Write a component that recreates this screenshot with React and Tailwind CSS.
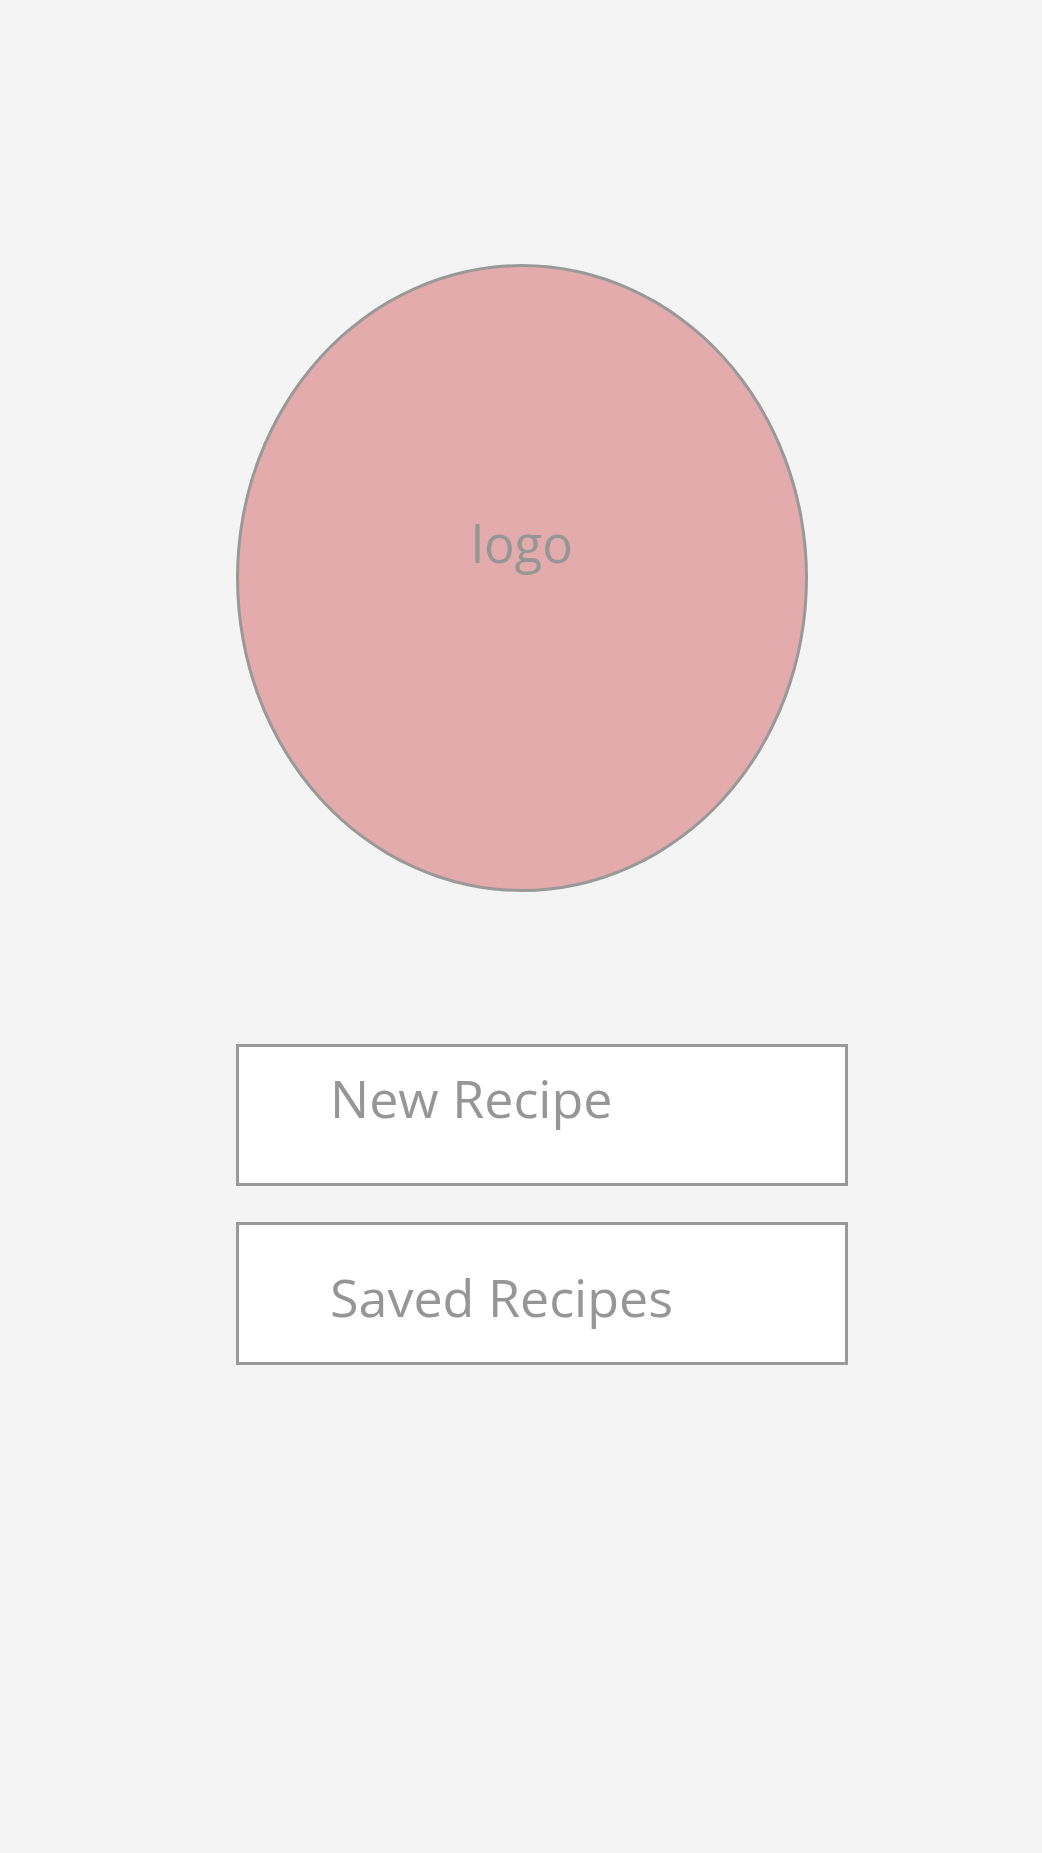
export default function App() {
  return (
    <div
      className="min-h-[1853px] w-full bg-[#f4f4f4] pl-[236px] pt-[264px]"
      style={{ fontFamily: '"Open Sans", "Noto Sans", sans-serif' }}
    >
      <div className="flex flex-col items-start">
        <div className="h-[628px] w-[572px] rounded-[50%] border-[3px] border-[#999999] bg-[#e3abac] pt-[251px] text-center">
          <span className="block text-[51px] leading-none text-[#969696]">logo</span>
        </div>
        <div className="mt-[152px] h-[142px] w-[612px] border-[3px] border-[#999999] bg-white pl-[91px] pt-[25px]">
          <span className="block text-[52px] leading-none text-[#969696]">New Recipe</span>
        </div>
        <div className="mt-[36px] h-[143px] w-[612px] border-[3px] border-[#999999] bg-white pl-[91px] pt-[46px]">
          <span className="block text-[52px] leading-none text-[#969696]">Saved Recipes</span>
        </div>
      </div>
    </div>
  );
}
